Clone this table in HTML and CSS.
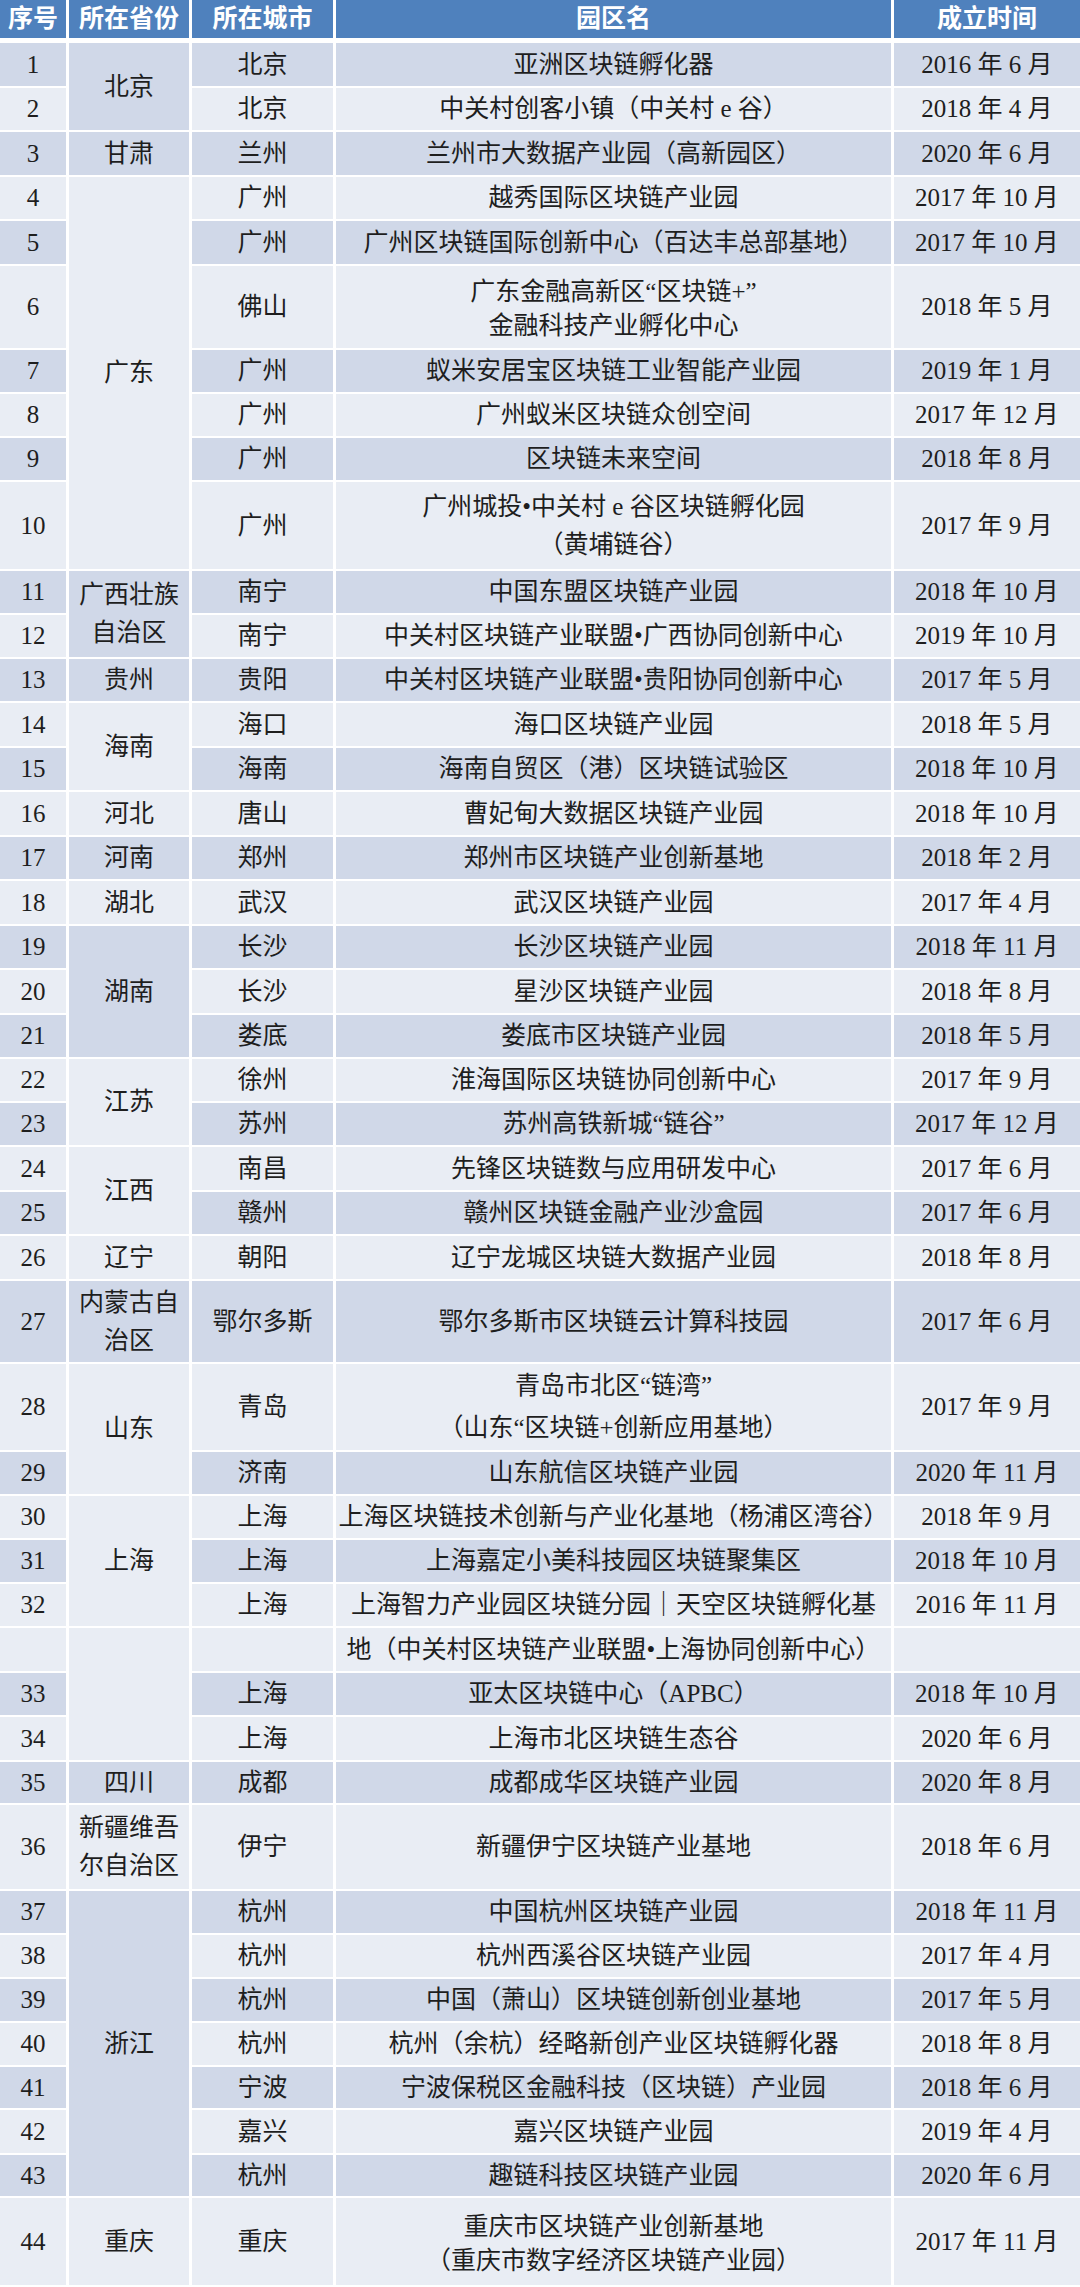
FILE: index.html
```html
<!DOCTYPE html>
<html lang="zh-CN">
<head>
<meta charset="utf-8">
<title>区块链产业园区</title>
<link rel="stylesheet" href="styles.css">
</head>
<body>
<table class="parks">
<colgroup>
<col class="c-no"><col class="c-prov"><col class="c-city"><col class="c-name"><col class="c-date">
</colgroup>
<thead>
<tr class="r43"><th>序号</th><th>所在省份</th><th>所在城市</th><th>园区名</th><th class="last">成立时间</th></tr>
</thead>
<tbody>
<tr class="r45 d"><td>1</td><td rowspan="2" class="pd">北京</td><td>北京</td><td>亚洲区块链孵化器</td><td class="last">2016 年 6 月</td></tr>
<tr class="r44 l"><td>2</td><td>北京</td><td>中关村创客小镇（中关村 e 谷）</td><td class="last">2018 年 4 月</td></tr>
<tr class="r45 d"><td>3</td><td class="pd">甘肃</td><td>兰州</td><td>兰州市大数据产业园（高新园区）</td><td class="last">2020 年 6 月</td></tr>
<tr class="r44 l"><td>4</td><td rowspan="7" class="pl">广东</td><td>广州</td><td>越秀国际区块链产业园</td><td class="last">2017 年 10 月</td></tr>
<tr class="r45 d"><td>5</td><td>广州</td><td>广州区块链国际创新中心（百达丰总部基地）</td><td class="last">2017 年 10 月</td></tr>
<tr class="r84 l"><td>6</td><td>佛山</td><td class="two tight">广东金融高新区“区块链+”<br>金融科技产业孵化中心</td><td class="last">2018 年 5 月</td></tr>
<tr class="r44 d"><td>7</td><td>广州</td><td>蚁米安居宝区块链工业智能产业园</td><td class="last">2019 年 1 月</td></tr>
<tr class="r44 l"><td>8</td><td>广州</td><td>广州蚁米区块链众创空间</td><td class="last">2017 年 12 月</td></tr>
<tr class="r44 d"><td>9</td><td>广州</td><td>区块链未来空间</td><td class="last">2018 年 8 月</td></tr>
<tr class="r89 l"><td>10</td><td>广州</td><td class="two">广州城投•中关村 e 谷区块链孵化园<br>（黄埔链谷）</td><td class="last">2017 年 9 月</td></tr>
<tr class="r44 d"><td>11</td><td rowspan="2" class="pd two">广西壮族<br>自治区</td><td>南宁</td><td>中国东盟区块链产业园</td><td class="last">2018 年 10 月</td></tr>
<tr class="r44 l"><td>12</td><td>南宁</td><td>中关村区块链产业联盟•广西协同创新中心</td><td class="last">2019 年 10 月</td></tr>
<tr class="r44 d"><td>13</td><td class="pd">贵州</td><td>贵阳</td><td>中关村区块链产业联盟•贵阳协同创新中心</td><td class="last">2017 年 5 月</td></tr>
<tr class="r45 l"><td>14</td><td rowspan="2" class="pl">海南</td><td>海口</td><td>海口区块链产业园</td><td class="last">2018 年 5 月</td></tr>
<tr class="r44 d"><td>15</td><td>海南</td><td>海南自贸区（港）区块链试验区</td><td class="last">2018 年 10 月</td></tr>
<tr class="r45 l"><td>16</td><td class="pl">河北</td><td>唐山</td><td>曹妃甸大数据区块链产业园</td><td class="last">2018 年 10 月</td></tr>
<tr class="r44 d"><td>17</td><td class="pd">河南</td><td>郑州</td><td>郑州市区块链产业创新基地</td><td class="last">2018 年 2 月</td></tr>
<tr class="r45 l"><td>18</td><td class="pl">湖北</td><td>武汉</td><td>武汉区块链产业园</td><td class="last">2017 年 4 月</td></tr>
<tr class="r44 d"><td>19</td><td rowspan="3" class="pd">湖南</td><td>长沙</td><td>长沙区块链产业园</td><td class="last">2018 年 11 月</td></tr>
<tr class="r45 l"><td>20</td><td>长沙</td><td>星沙区块链产业园</td><td class="last">2018 年 8 月</td></tr>
<tr class="r44 d"><td>21</td><td>娄底</td><td>娄底市区块链产业园</td><td class="last">2018 年 5 月</td></tr>
<tr class="r44 l"><td>22</td><td rowspan="2" class="pl">江苏</td><td>徐州</td><td>淮海国际区块链协同创新中心</td><td class="last">2017 年 9 月</td></tr>
<tr class="r44 d"><td>23</td><td>苏州</td><td>苏州高铁新城“链谷”</td><td class="last">2017 年 12 月</td></tr>
<tr class="r45 l"><td>24</td><td rowspan="2" class="pl">江西</td><td>南昌</td><td>先锋区块链数与应用研发中心</td><td class="last">2017 年 6 月</td></tr>
<tr class="r44 d"><td>25</td><td>赣州</td><td>赣州区块链金融产业沙盒园</td><td class="last">2017 年 6 月</td></tr>
<tr class="r45 l"><td>26</td><td class="pl">辽宁</td><td>朝阳</td><td>辽宁龙城区块链大数据产业园</td><td class="last">2018 年 8 月</td></tr>
<tr class="r83 d"><td>27</td><td class="pd two">内蒙古自<br>治区</td><td>鄂尔多斯</td><td>鄂尔多斯市区块链云计算科技园</td><td class="last">2017 年 6 月</td></tr>
<tr class="r88 l"><td>28</td><td rowspan="2" class="pl">山东</td><td>青岛</td><td class="two loose">青岛市北区“链湾”<br>（山东“区块链+创新应用基地）</td><td class="last">2017 年 9 月</td></tr>
<tr class="r44 d"><td>29</td><td>济南</td><td>山东航信区块链产业园</td><td class="last">2020 年 11 月</td></tr>
<tr class="r44 l"><td>30</td><td rowspan="3" class="pl">上海</td><td>上海</td><td>上海区块链技术创新与产业化基地（杨浦区湾谷）</td><td class="last">2018 年 9 月</td></tr>
<tr class="r44 d"><td>31</td><td>上海</td><td>上海嘉定小美科技园区块链聚集区</td><td class="last">2018 年 10 月</td></tr>
<tr class="r44 l"><td>32</td><td>上海</td><td>上海智力产业园区块链分园｜天空区块链孵化基</td><td class="last">2016 年 11 月</td></tr>
<tr class="r45 l"><td></td><td rowspan="3" class="pl"></td><td></td><td>地（中关村区块链产业联盟•上海协同创新中心）</td><td class="last"></td></tr>
<tr class="r44 d"><td>33</td><td>上海</td><td>亚太区块链中心（APBC）</td><td class="last">2018 年 10 月</td></tr>
<tr class="r45 l"><td>34</td><td>上海</td><td>上海市北区块链生态谷</td><td class="last">2020 年 6 月</td></tr>
<tr class="r43 d"><td>35</td><td class="pd">四川</td><td>成都</td><td>成都成华区块链产业园</td><td class="last">2020 年 8 月</td></tr>
<tr class="r86 l"><td>36</td><td class="pl two">新疆维吾<br>尔自治区</td><td>伊宁</td><td>新疆伊宁区块链产业基地</td><td class="last">2018 年 6 月</td></tr>
<tr class="r44 d"><td>37</td><td rowspan="7" class="pd">浙江</td><td>杭州</td><td>中国杭州区块链产业园</td><td class="last">2018 年 11 月</td></tr>
<tr class="r44 l"><td>38</td><td>杭州</td><td>杭州西溪谷区块链产业园</td><td class="last">2017 年 4 月</td></tr>
<tr class="r44 d"><td>39</td><td>杭州</td><td>中国（萧山）区块链创新创业基地</td><td class="last">2017 年 5 月</td></tr>
<tr class="r44 l"><td>40</td><td>杭州</td><td>杭州（余杭）经略新创产业区块链孵化器</td><td class="last">2018 年 8 月</td></tr>
<tr class="r43 d"><td>41</td><td>宁波</td><td>宁波保税区金融科技（区块链）产业园</td><td class="last">2018 年 6 月</td></tr>
<tr class="r45 l"><td>42</td><td>嘉兴</td><td>嘉兴区块链产业园</td><td class="last">2019 年 4 月</td></tr>
<tr class="r43 d"><td>43</td><td>杭州</td><td>趣链科技区块链产业园</td><td class="last">2020 年 6 月</td></tr>
<tr class="r89 l"><td>44</td><td class="pl">重庆</td><td>重庆</td><td class="two tight">重庆市区块链产业创新基地<br>（重庆市数字经济区块链产业园）</td><td class="last">2017 年 11 月</td></tr>
</tbody>
</table>
</body>
</html>
```

FILE: styles.css
```css
html, body {
  margin: 0;
  padding: 0;
  background: #ffffff;
}

.parks {
  width: 1080px;
  table-layout: fixed;
  border-collapse: separate;
  border-spacing: 0;
  font-family: "Liberation Serif", "Noto Sans CJK SC", serif;
  font-size: 25px;
  color: #1e1e1e;
}

.c-no { width: 69px; }
.c-prov { width: 123px; }
.c-city { width: 144px; }
.c-name { width: 558px; }
.c-date { width: 186px; }

.parks th,
.parks td {
  padding: 0;
  text-align: center;
  vertical-align: middle;
  white-space: nowrap;
  overflow: hidden;
  border-right: 3px solid #ffffff;
  border-bottom: 2px solid #ffffff;
  line-height: 30px;
}

.parks th {
  background: #4f81bd;
  color: #ffffff;
  font-weight: 700;
  border-bottom-width: 5px;
}

.parks .last {
  border-right: 0;
}

.d td { background: #d0d8e8; }
.l td { background: #e9edf4; }

.parks td.pd { background: #d0d8e8; }
.parks td.pl { background: #e9edf4; }

.parks td.two { line-height: 38px; }
.parks td.two.tight { line-height: 34px; padding-top: 4px; }
.parks td.two.loose { line-height: 42px; }

.r43 { height: 43px; }
.r44 { height: 44px; }
.r45 { height: 45px; }
.r83 { height: 83px; }
.r84 { height: 84px; }
.r86 { height: 86px; }
.r88 { height: 88px; }
.r89 { height: 89px; }
```
